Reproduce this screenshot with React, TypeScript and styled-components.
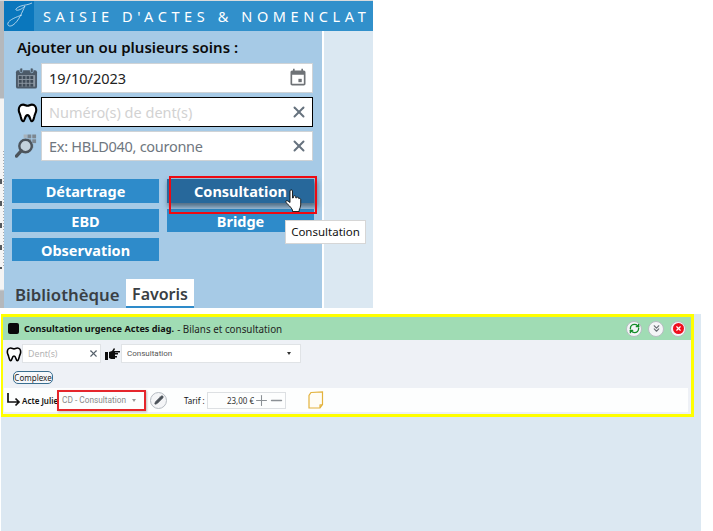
import React from "react";
import styled, { createGlobalStyle } from "styled-components";
import { X, Plus, Minus, Pencil, RefreshCw, ChevronsDown } from "lucide-react";

const GlobalStyle = createGlobalStyle`
  html, body {
    margin: 0;
    padding: 0;
    background: #ffffff;
    font-family: "Open Sans", "Noto Sans", sans-serif;
  }
  *, *::before, *::after { box-sizing: border-box; }
`;

const Page = styled.div`
  width: 713px;
  height: 531px;
  overflow: hidden;
  position: relative;
`;

const TopEdge = styled.div`
  width: 373px;
  height: 1px;
  background: #d9dbdd;
`;

const TopArea = styled.div`
  display: flex;
  height: 307px;
  width: 373px;
`;

const EdgeStrip = styled.div`
  width: 4px;
  flex-shrink: 0;
  background:
    repeating-linear-gradient(#a4a8ac 0, #a4a8ac 1px, transparent 1px, transparent 3px) 3px 150px / 1px 115px no-repeat,
    repeating-linear-gradient(#55595d 0, #55595d 5px, transparent 5px, transparent 22px) 0 178px / 2px 90px no-repeat,
    linear-gradient(#b4b8bc 0, #b4b8bc 97px, #f4f4f4 98px, #f4f4f4 288px, #b4b8bc 290px);
`;

const Win = styled.div`
  flex: 1;
  min-width: 0;
  display: flex;
  flex-direction: column;
`;

const TitleBar = styled.div`
  height: 30px;
  flex-shrink: 0;
  background: #3190cb;
  display: flex;
  align-items: center;
`;

const LogoBox = styled.div`
  width: 30px;
  height: 30px;
  background: #0a77bd;
  flex-shrink: 0;
`;

const TitleText = styled.div`
  margin-left: 9px;
  color: #ffffff;
  font-size: 14.5px;
  letter-spacing: 4.6px;
  white-space: nowrap;
  font-family: "Noto Sans", sans-serif;
`;

const WinBody = styled.div`
  flex: 1;
  display: flex;
  min-height: 0;
`;

const Panel = styled.div`
  width: 318px;
  background: #a6cae6;
  display: flex;
  flex-direction: column;
`;

const SideGap = styled.div`
  flex: 1;
  margin-left: 2px;
  background: #dbe8f2;
`;

const PanelTitle = styled.div`
  margin: 6px 0 0 13px;
  height: 26px;
  line-height: 21px;
  font-size: 15px;
  font-weight: 600;
  color: #0b0b0b;
  font-family: "Noto Sans", sans-serif;
`;

const FieldList = styled.div`
  display: flex;
  flex-direction: column;
  gap: 4px;
`;

const FieldRow = styled.div`
  display: flex;
  align-items: center;
`;

const FieldIcon = styled.div`
  width: 37px;
  height: 30px;
  display: flex;
  align-items: center;
  justify-content: flex-end;
  padding-right: 3px;
`;

const Field = styled.div<{ $focused?: boolean }>`
  width: 272px;
  height: 30px;
  background: #ffffff;
  border: 1px solid ${(p) => (p.$focused ? "#000000" : "#cfd3d6")};
  display: flex;
  align-items: center;
  justify-content: space-between;
  padding: 0 4px 0 7px;
  font-family: "Noto Sans", sans-serif;
  font-size: 14.5px;
`;

const FieldText = styled.span<{ $tone: "value" | "hint" | "muted" }>`
  color: ${(p) => (p.$tone === "value" ? "#222222" : p.$tone === "hint" ? "#d2d2d2" : "#6f7780")};
  letter-spacing: ${(p) => (p.$tone === "muted" ? "-0.28px" : "0")};
`;

const Buttons = styled.div`
  margin: 18px 0 0 8px;
  display: grid;
  grid-template-columns: 147px 147px;
  grid-template-rows: 24px 23px 23px;
  column-gap: 8px;
  row-gap: 6px;
`;

const ActionButton = styled.div<{ $hover?: boolean }>`
  position: relative;
  background: ${(p) => (p.$hover ? "#27689b" : "#2e8bca")};
  color: #ffffff;
  font-family: "Noto Sans", sans-serif;
  font-size: 14.5px;
  font-weight: 700;
  line-height: 25px;
  text-align: center;
  ${(p) =>
    p.$hover &&
    `
    z-index: 1;
    box-shadow: 2px 3px 5px 1px rgba(40, 60, 80, 0.65);
    &::after {
      content: "";
      position: absolute;
      left: 2px;
      top: -3px;
      width: 148px;
      height: 38px;
      border: 2px solid #ee0a12;
    }
  `}
`;

const Tabs = styled.div`
  margin-top: auto;
  display: flex;
  align-items: flex-end;
  height: 29px;
  padding-left: 11px;
`;

const Tab = styled.div<{ $active?: boolean }>`
  height: 29px;
  padding: 0 ${(p) => (p.$active ? "6.5px" : "0")};
  margin-right: ${(p) => (p.$active ? "0" : "6px")};
  background: ${(p) => (p.$active ? "#ffffff" : "transparent")};
  border-bottom: ${(p) => (p.$active ? "2px solid #2e8bca" : "none")};
  color: #3a3f44;
  font-family: "Noto Sans", sans-serif;
  font-size: ${(p) => (p.$active ? "16px" : "16.8px")};
  font-weight: 600;
  line-height: 31px;
`;

const Tooltip = styled.div`
  position: absolute;
  left: 285px;
  top: 220px;
  width: 81px;
  height: 24px;
  background: #ffffff;
  border: 1px solid #d6d6d6;
  color: #111111;
  font-family: "Noto Sans", sans-serif;
  font-size: 11.5px;
  line-height: 22px;
  text-align: center;
  z-index: 3;
`;

const Cursor = styled.svg`
  position: absolute;
  left: 285px;
  top: 189px;
  z-index: 4;
`;

const LowerArea = styled.div`
  margin: 6px 12px 0 1px;
  height: 217px;
  background: #dce8f2;
`;

const Card = styled.div`
  width: 693px;
  height: 103px;
  border: 3px solid #ffff00;
  border-left-width: 2px;
  background: #eef1f6;
  display: flex;
  flex-direction: column;
`;

const CardHead = styled.div`
  height: 23px;
  background: #a0dcb4;
  display: flex;
  align-items: center;
  padding: 0 5px 0 5px;
  font-family: "Noto Sans", sans-serif;
  font-size: 9.85px;
  color: #222222;
`;

const HeadSquare = styled.span`
  width: 11px;
  height: 11px;
  border-radius: 2px;
  background: #0a0a0a;
  margin-right: 5px;
`;

const HeadStrong = styled.strong`
  font-weight: 700;
  font-size: 9.15px;
  color: #111111;
  margin-right: 3px;
`;

const HeadActions = styled.div`
  margin-left: auto;
  display: flex;
  gap: 6px;
`;

const RoundButton = styled.div<{ $size?: number }>`
  width: ${(p) => p.$size ?? 16}px;
  height: ${(p) => p.$size ?? 16}px;
  border-radius: 50%;
  background: #f4f5f7;
  border: 1px solid #b6bcc2;
  display: flex;
  align-items: center;
  justify-content: center;
`;

const RedDot = styled.span`
  width: 11px;
  height: 11px;
  border-radius: 50%;
  background: #f00f1e;
  display: flex;
  align-items: center;
  justify-content: center;
`;

const FormRow = styled.div`
  display: flex;
  align-items: center;
  height: 19px;
  margin-top: 4px;
  padding-left: 3px;
`;

const SmallInput = styled.div<{ $w: number }>`
  width: ${(p) => p.$w}px;
  height: 19px;
  background: #ffffff;
  border: 1px solid #e0e3e6;
  display: flex;
  align-items: center;
  justify-content: space-between;
  padding: 0 1px 0 5px;
  font-family: Roboto, sans-serif;
  font-size: 8px;
  color: #555555;
`;

const Hint = styled.span`
  color: #b4b4b4;
  font-family: "Noto Sans", sans-serif;
  font-size: 8.8px;
`;

const Caret = styled.span<{ $color: string; $gap: number }>`
  width: 0;
  height: 0;
  border-left: 2.5px solid transparent;
  border-right: 2.5px solid transparent;
  border-top: 3px solid ${(p) => p.$color};
  margin-right: ${(p) => p.$gap}px;
`;

const HandSlot = styled.span`
  display: flex;
  margin: 0 1px 0 4px;
`;

const TagRow = styled.div`
  padding-left: 10px;
  margin-top: 8px;
  height: 13px;
  display: flex;
`;

const Tag = styled.div`
  width: 40px;
  height: 13px;
  border: 1px solid #3a6f90;
  border-radius: 5px;
  background: #f6f8fb;
  font-family: "Noto Sans", sans-serif;
  font-size: 8px;
  line-height: 11px;
  text-align: center;
  color: #222222;
`;

const ActRow = styled.div`
  margin: 4px 3px 0 1px;
  height: 24px;
  background: #fdfefe;
  display: flex;
  align-items: center;
  font-family: "Noto Sans", sans-serif;
  font-size: 8px;
  color: #111111;
`;

const ActLabel = styled.span`
  font-weight: 600;
  margin-left: 1px;
  width: 35px;
  white-space: nowrap;
`;

const ActSelect = styled.div`
  width: 89px;
  height: 21px;
  margin-right: 4px;
  border: 2px solid #e5262c;
  box-shadow: 1px 1px 2px rgba(0, 0, 0, 0.25);
  display: flex;
  align-items: center;
  justify-content: space-between;
  padding: 0 2px 0 3px;
  color: #8a8a8a;
  font-family: Roboto, sans-serif;
  font-size: 8.3px;
`;

const TarifLabel = styled.span`
  margin: 0 3px 0 17px;
  width: 20px;
  white-space: nowrap;
`;

const TarifBox = styled.div`
  width: 79px;
  height: 17px;
  border: 1px solid #dde0e3;
  display: flex;
  align-items: center;
  justify-content: flex-end;
  color: #333333;
  font-size: 8px;
`;

const Amount = styled.span`
  margin-right: -1px;
`;

const PlusMark = styled(Plus)`
  margin-right: -2px;
`;

const NoteIcon = styled.svg`
  margin-left: 21px;
`;

const CalendarGlyph = () => (
  <svg width="23" height="24" viewBox="0 0 24 24">
    <rect x="1" y="4" width="22" height="19" rx="2" fill="#4c5a68" />
    <rect x="3" y="9" width="18" height="12" fill="#8d98a3" />
    <rect x="5" y="1.5" width="3" height="5" rx="1.5" fill="#4c5a68" stroke="#a6cae6" strokeWidth="0.7" />
    <rect x="16" y="1.5" width="3" height="5" rx="1.5" fill="#4c5a68" stroke="#a6cae6" strokeWidth="0.7" />
    {[10, 14, 18].map((y) =>
      [4, 8, 12, 16].map((x) => <rect key={`${x}-${y}`} x={x} y={y} width="3" height="3" fill="#3e4b58" />),
    )}
  </svg>
);

const FieldCalendar = () => (
  <svg width="20" height="20" viewBox="0 0 24 24" fill="#6e7276">
    <path d="M19 3h-1V1h-2v2H8V1H6v2H5c-1.1 0-2 .9-2 2v14c0 1.1.9 2 2 2h14c1.1 0 2-.9 2-2V5c0-1.1-.9-2-2-2zm0 16H5V8h14v11z" />
    <rect x="12.5" y="13" width="4" height="4" />
  </svg>
);

const ToothGlyph = ({ size, stroke }: { size: number; stroke: number }) => (
  <svg width={size} height={size} viewBox="0 0 24 24">
    <path
      d="M7 3C3.5 3 2 6 2 9c0 3 1.6 4.6 2.2 7.5C4.8 19 5.2 22 7 22c2.2 0 1.8-7 5-7s2.8 7 5 7c1.8 0 2.2-3 2.8-5.5C20.4 13.6 22 12 22 9c0-3-1.5-6-5-6-2.2 0-3 1.3-5 1.3S9.2 3 7 3z"
      fill="#ffffff"
      stroke="#000000"
      strokeWidth={stroke}
      strokeLinejoin="round"
    />
  </svg>
);

const SearchGlyph = () => (
  <svg width="23" height="26" viewBox="0 0 24 26">
    {[0, 5, 10].map((y) =>
      [13, 18].map((x) => <rect key={`${x}-${y}`} x={x - (y === 10 ? 3 : 0)} y={y + 1} width="4" height="4" fill="#7d8790" />),
    )}
    <rect x="9" y="1" width="3.5" height="3.5" fill="#a8b2ba" />
    <circle cx="11" cy="13" r="6.5" fill="#c4d2dc" stroke="#4c545c" strokeWidth="2.5" />
    <path d="M6.5 18 1.5 23.5" stroke="#4c545c" strokeWidth="3.5" strokeLinecap="round" />
  </svg>
);

const LogoGlyph = () => (
  <svg width="30" height="30" viewBox="0 0 30 30" fill="none" stroke="#cfe4f3" strokeWidth="0.8">
    <path d="M28 2c-4 2-8 2-11 3-3 1-6 3-5 4 2 1 6-1 9-4M21 5c-3 6-6 15-12 19-3 2-6 1-5-2 1-3 8-6 14-8" />
  </svg>
);

const PointingHand = () => (
  <svg width="15" height="12" viewBox="0 0 15 12">
    <path d="M0 4h3v8H0zM4 4l3-1 2-3 1 1-1 2h6v1.5H10V5h3v1.5h-3V8h2v1.5h-2V11H6l-2-1z" fill="#0d0d0d" />
  </svg>
);

export default function App() {
  return (
    <Page>
      <GlobalStyle />
      <TopEdge />
      <TopArea>
        <EdgeStrip />
        <Win>
          <TitleBar>
            <LogoBox>
              <LogoGlyph />
            </LogoBox>
            <TitleText>SAISIE D'ACTES &amp; NOMENCLAT</TitleText>
          </TitleBar>
          <WinBody>
            <Panel>
              <PanelTitle>Ajouter un ou plusieurs soins :</PanelTitle>
              <FieldList>
                <FieldRow>
                  <FieldIcon>
                    <CalendarGlyph />
                  </FieldIcon>
                  <Field>
                    <FieldText $tone="value">19/10/2023</FieldText>
                    <FieldCalendar />
                  </Field>
                </FieldRow>
                <FieldRow>
                  <FieldIcon>
                    <ToothGlyph size={21} stroke={2.4} />
                  </FieldIcon>
                  <Field $focused>
                    <FieldText $tone="hint">Numéro(s) de dent(s)</FieldText>
                    <X size={18} color="#66727e" strokeWidth={2.6} />
                  </Field>
                </FieldRow>
                <FieldRow>
                  <FieldIcon>
                    <SearchGlyph />
                  </FieldIcon>
                  <Field>
                    <FieldText $tone="muted">Ex: HBLD040, couronne</FieldText>
                    <X size={18} color="#66727e" strokeWidth={2.6} />
                  </Field>
                </FieldRow>
              </FieldList>
              <Buttons>
                <ActionButton>Détartrage</ActionButton>
                <ActionButton $hover>Consultation</ActionButton>
                <ActionButton>EBD</ActionButton>
                <ActionButton>Bridge</ActionButton>
                <ActionButton>Observation</ActionButton>
              </Buttons>
              <Tabs>
                <Tab>Bibliothèque</Tab>
                <Tab $active>Favoris</Tab>
              </Tabs>
            </Panel>
            <SideGap />
          </WinBody>
        </Win>
      </TopArea>

      <LowerArea>
        <Card>
          <CardHead>
            <HeadSquare />
            <HeadStrong>Consultation urgence Actes diag.</HeadStrong>
            <span>- Bilans et consultation</span>
            <HeadActions>
              <RoundButton>
                <RefreshCw size={11} color="#148c28" strokeWidth={3} />
              </RoundButton>
              <RoundButton>
                <ChevronsDown size={11} color="#6a6f75" strokeWidth={2.4} />
              </RoundButton>
              <RoundButton>
                <RedDot>
                  <X size={7} color="#ffffff" strokeWidth={4} />
                </RedDot>
              </RoundButton>
            </HeadActions>
          </CardHead>
          <FormRow>
            <ToothGlyph size={16} stroke={2.4} />
            <SmallInput $w={79}>
              <Hint>Dent(s)</Hint>
              <X size={11} color="#55606a" strokeWidth={2.4} />
            </SmallInput>
            <HandSlot>
              <PointingHand />
            </HandSlot>
            <SmallInput $w={180}>
              <span>Consultation</span>
              <Caret $color="#333333" $gap={8} />
            </SmallInput>
          </FormRow>
          <TagRow>
            <Tag>Complexe</Tag>
          </TagRow>
          <ActRow>
            <svg width="17" height="16" viewBox="0 0 17 16" fill="none" stroke="#111111" strokeWidth="1.7">
              <path d="M4 1v9h11M11.5 6.5 15 10l-3.5 3.5" />
            </svg>
            <ActLabel>Acte Julie</ActLabel>
            <ActSelect>
              <span>CD - Consultation</span>
              <Caret $color="#999999" $gap={6} />
            </ActSelect>
            <RoundButton $size={17}>
              <Pencil size={10} color="#4a5158" fill="#4a5158" />
            </RoundButton>
            <TarifLabel>Tarif :</TarifLabel>
            <TarifBox>
              <Amount>23,00 €</Amount>
              <PlusMark size={17} color="#8b9095" strokeWidth={1.5} />
              <Minus size={17} color="#8b9095" strokeWidth={2} />
            </TarifBox>
            <NoteIcon width="17" height="18" viewBox="0 0 17 18" fill="#fffdf6" stroke="#e3b23c" strokeWidth="1.2">
              <path d="M4 1.5 15.5 1v12.5L13 17H2V4.5zM15.5 13.5 13 14l0 3" />
            </NoteIcon>
          </ActRow>
        </Card>
      </LowerArea>

      <Tooltip>Consultation</Tooltip>
      <Cursor width="18" height="24" viewBox="0 0 18 24">
        <path
          d="M5 2c0-1.5 2.5-1.5 2.5 0v7l1-.3V7.5c0-1 2-1 2.2 0v1.3l1-.1c.5-.8 2-.6 2 .4v.5c.8-.5 2-.1 2 .9v5.5c0 2-1 3.5-1.5 5v1.5H7.5v-1.5C6 18 3 15.5 1 13.5c-.8-1.3.7-2.500 2-1.500l2 1.500z"
          fill="#ffffff"
          stroke="#111111"
          strokeWidth="0.9"
        />
      </Cursor>
    </Page>
  );
}
